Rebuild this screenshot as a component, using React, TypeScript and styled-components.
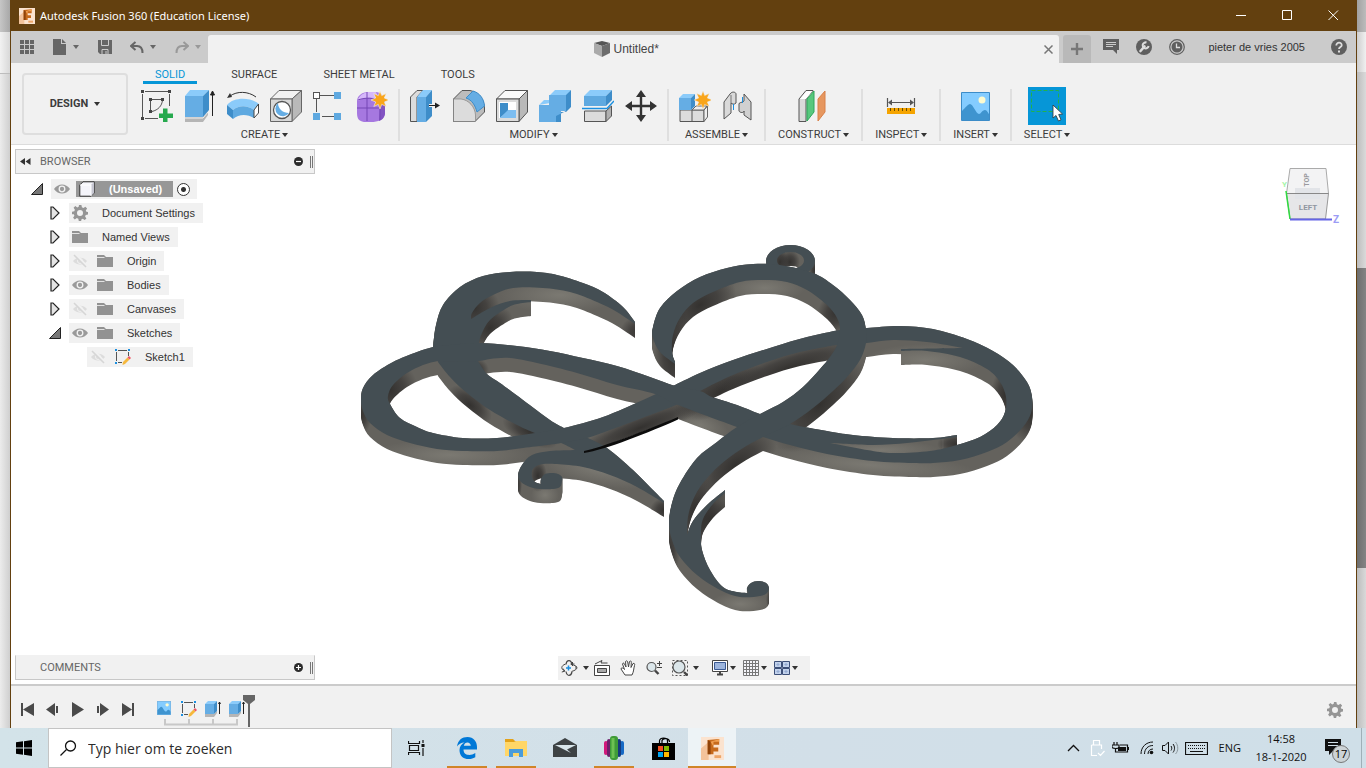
import React from 'react';
import styled, { createGlobalStyle } from 'styled-components';

const INK = '#3c3c3c';
const CHROME = '#f1f1f1';
const BROWN = '#63400f';

const Global = createGlobalStyle`
  * { box-sizing: border-box; }
  body { margin: 0; font-family: "Liberation Sans", Arial, sans-serif; font-size: 11px; color: ${INK}; }
  button { font: inherit; color: inherit; background: none; border: 0; padding: 0; }
  ul { list-style: none; margin: 0; padding: 0; }
  svg { display: block; flex: none; }
`;

/* ---------- page frame ---------- */

const Page = styled.div`
  display: flex;
  flex-direction: column;
  min-height: 100vh;
`;
const Desktop = styled.div`
  flex: 1;
  display: flex;
`;
const BehindLeft = styled.div`
  width: 10px;
  display: flex;
  flex-direction: column;
  background: linear-gradient(to right, #ececec, #cfcfcf);
  &::before {
    content: '';
    height: 32px;
    background: linear-gradient(to right, #c6c6c6, #a8a8a8);
  }
  &::after {
    content: '';
    height: 41px;
    border-bottom: 1px solid #bdbdbd;
    background: linear-gradient(to right, #f2f2f2, #d8d8d8);
  }
`;
const BehindRight = styled.div`
  width: 9px;
  display: flex;
  flex-direction: column;
  background: linear-gradient(to right, #bdbdbd, #d9d9d9);
`;
const BehindBlock = styled.div<{ $h: number; $from: string; $to: string }>`
  height: ${p => p.$h}px;
  background: linear-gradient(to right, ${p => p.$from}, ${p => p.$to});
`;
const AppWindow = styled.main`
  flex: 1;
  min-width: 0;
  display: flex;
  flex-direction: column;
  border: solid ${BROWN};
  border-width: 0 1px;
`;

/* ---------- title bar ---------- */

const TitleBar = styled.header`
  height: 31px;
  display: flex;
  align-items: center;
  gap: 5px;
  padding-left: 8px;
  background: ${BROWN};
  color: #fff;
  font: 11px/16px "Noto Sans", "Open Sans", sans-serif;
`;
const TitleText = styled.span`
  flex: 1;
`;
const CaptionButton = styled.button`
  width: 46px;
  height: 31px;
  display: flex;
  align-items: center;
  justify-content: center;
  margin-right: -5px;
  &:last-child { margin-right: 0; }
`;

/* ---------- document tab bar ---------- */

const TabBar = styled.div`
  height: 32px;
  display: flex;
  align-items: flex-end;
  background: #cbcbcb;
  color: #666;
`;
const QuickAccess = styled.div`
  width: 197px;
  height: 32px;
  display: flex;
  align-items: center;
  padding: 0 7px 0 9px;
  justify-content: space-between;
`;
const QuickItem = styled.button<{ $faded?: boolean }>`
  display: flex;
  align-items: center;
  gap: 6px;
  color: ${p => (p.$faded ? '#999' : '#666')};
`;
const DocTab = styled.div`
  flex: 1;
  height: 28px;
  display: flex;
  align-items: center;
  padding: 0 6px;
  background: ${CHROME};
  border-radius: 3px 3px 0 0;
`;
const DocTitle = styled.div`
  flex: 1;
  display: flex;
  align-items: center;
  justify-content: center;
  gap: 4px;
  padding-right: 6px;
  font: 12px/16px "Liberation Sans", Arial, sans-serif;
  color: #444;
`;
const NewTab = styled.button`
  width: 28px;
  height: 28px;
  margin-left: 4px;
  display: flex;
  align-items: center;
  justify-content: center;
  background: #b9b9b9;
  border-radius: 3px 3px 0 0;
`;
const AccountTools = styled.div`
  height: 32px;
  display: flex;
  align-items: center;
  gap: 17px;
  padding: 0 9px 0 12px;
`;
const UserName = styled.button`
  margin: 0 9px 0 6px;
  color: #333;
`;

/* ---------- ribbon ---------- */

const Ribbon = styled.section`
  height: 82px;
  display: flex;
  background: ${CHROME};
  border-bottom: 1px solid #dcdcdc;
  font: 11px/12px Roboto, "Liberation Sans", sans-serif;
  color: ${INK};
`;
const Workspace = styled.button`
  width: 106px;
  height: 62px;
  margin: 10px 3px 0 11px;
  display: flex;
  align-items: center;
  justify-content: center;
  gap: 6px;
  border: 2px solid #dedede;
  border-radius: 4px;
  font-weight: 700;
`;
const RibbonBody = styled.div`
  display: flex;
  flex-direction: column;
`;
const RibbonTabs = styled.nav`
  display: flex;
  gap: 22px;
  height: 23px;
  padding: 5px 0 0 12px;
`;
const RibbonTab = styled.button<{ $active?: boolean }>`
  height: 16px;
  padding: 1px 12px;
  border-bottom: 3px solid ${p => (p.$active ? '#0696d7' : 'transparent')};
  color: ${p => (p.$active ? '#0696d7' : INK)};
  line-height: 12px;
`;
const Groups = styled.div`
  display: flex;
  align-items: flex-start;
  padding-top: 3px;
`;
const Group = styled.div<{ $pad?: number; $last?: boolean }>`
  height: 52px;
  display: flex;
  flex-direction: column;
  align-items: center;
  justify-content: space-between;
  padding: 0 ${p => p.$pad ?? 10}px;
  border-right: 2px solid ${p => (p.$last ? 'transparent' : '#dfdfdf')};
`;
const Icons = styled.div`
  display: flex;
  gap: 11px;
`;
const ToolButton = styled.button<{ $on?: boolean }>`
  width: ${p => (p.$on ? 38 : 32)}px;
  height: ${p => (p.$on ? 38 : 32)}px;
  margin: ${p => (p.$on ? '-2px 0 0' : '1px 0 0')};
  display: flex;
  align-items: center;
  justify-content: center;
  background: ${p => (p.$on ? '#0696d7' : 'none')};
`;
const GroupLabel = styled.button`
  display: flex;
  align-items: center;
  gap: 2px;
  line-height: 12px;
`;
const Caret = styled.span<{ $soft?: boolean }>`
  border: 3px solid transparent;
  border-top: 4px solid ${p => (p.$soft ? 'currentColor' : '#333')};
  border-bottom: 0;
`;

/* ---------- canvas ---------- */

const Canvas = styled.section`
  position: relative;
  flex: 1;
  min-height: 539px;
  display: flex;
  flex-direction: column;
  justify-content: space-between;
  padding: 4px;
  background: #fff;
`;
const ModelLayer = styled.svg`
  position: absolute;
  inset: 0;
  width: 100%;
  height: 100%;
`;
const TopRow = styled.div`
  position: relative;
  display: flex;
  justify-content: space-between;
  align-items: flex-start;
`;
const BottomRow = styled.div`
  position: relative;
  display: grid;
  grid-template-columns: 1fr auto 1fr;
  align-items: end;
`;
const CubeBox = styled.div`
  margin: 11px 10px 0 0;
`;
const Side = styled.aside`
  width: 300px;
`;
const PanelBar = styled.div<{ $closed?: boolean }>`
  width: 300px;
  height: 25px;
  display: flex;
  align-items: center;
  padding: 0 1px 0 4px;
  background: ${CHROME};
  border: 1px solid #c8c8c8;
  border-top-color: ${p => (p.$closed ? CHROME : '#c8c8c8')};
  color: #666;
  font: 11px/14px Roboto, "Liberation Sans", sans-serif;
`;
const PanelTitle = styled.span`
  flex: 1;
  margin-left: 9px;
`;
const Spacer = styled.span`
  width: 11px;
`;
const Grip = styled.span`
  width: 3px;
  height: 12px;
  margin-left: 7px;
  border: solid #777;
  border-width: 0 1px;
`;
const Tree = styled.ul`
  padding-top: 5px;
  display: flex;
  flex-direction: column;
  gap: 4px;
`;
const Row = styled.li<{ $depth: number }>`
  height: 20px;
  display: flex;
  align-items: center;
  padding-left: ${p => 16 + p.$depth * 18}px;
`;
const Toggle = styled.button`
  width: 12px;
  height: 14px;
  margin-right: 8px;
`;
const Chip = styled.div`
  height: 20px;
  display: flex;
  align-items: center;
  gap: 9px;
  padding: 0 8px 0 3px;
  background: ${CHROME};
`;
const Label = styled.span`
  margin-left: 5px;
  color: #333;
`;
const RootChip = styled(Chip)`
  gap: 6px;
  padding-right: 7px;
`;
const RootName = styled.span`
  height: 16px;
  display: flex;
  align-items: center;
  gap: 14px;
  padding: 0 11px 0 3px;
  background: #979797;
  color: #fff;
  font-weight: 700;
`;
const RootRadio = styled.input`
  appearance: none;
  width: 13px;
  height: 13px;
  margin: 0 0 0 -2px;
  border: 1px solid #333;
  border-radius: 50%;
  background: radial-gradient(circle, #333 0 2px, #fff 3px);
`;
const NavBar = styled.div`
  height: 24px;
  display: flex;
  align-items: center;
  gap: 10px;
  padding: 0 12px 0 3px;
  background: ${CHROME};
`;
const NavButton = styled.button<{ $menu?: boolean }>`
  display: flex;
  align-items: center;
  gap: 5px;
  margin-right: ${p => (p.$menu ? -5 : 0)}px;
`;
const NavDisplay = styled.div`
  display: flex;
  gap: 7px;
  margin-left: 8px;
`;
const TightButton = styled(NavButton)`
  gap: 2px;
`;

/* ---------- timeline ---------- */

const Timeline = styled.footer`
  height: 44px;
  display: flex;
  align-items: flex-start;
  padding: 8px 13px 0 10px;
  background: ${CHROME};
  border-top: 2px solid #cbcbcb;
`;
const Playback = styled.div`
  display: flex;
  gap: 11px;
  padding-top: 8px;
`;
const Features = styled.div`
  flex: 1;
  display: flex;
  align-items: flex-start;
  margin-left: 22px;
`;
const FeatureButton = styled.button`
  width: 24px;
  height: 31px;
  padding-top: 7px;
`;
const Marker = styled.div`
  margin: 1px 0 0 -10px;
`;
const SettingsButton = styled.button`
  padding-top: 8px;
`;

/* ---------- taskbar ---------- */

const Taskbar = styled.footer`
  height: 40px;
  display: flex;
  background: linear-gradient(to right, #d3e3e9, #d2dfe8 60%, #cfdfe8);
  font: 12px/18px "Open Sans", "Noto Sans", sans-serif;
  color: #111;
`;
const TaskButton = styled.button<{ $running?: boolean; $active?: boolean }>`
  width: 48px;
  height: 40px;
  display: flex;
  align-items: center;
  justify-content: center;
  position: relative;
  background: ${p => (p.$active ? '#edf3f6' : 'none')};
  &::after {
    content: '';
    display: ${p => (p.$running ? 'block' : 'none')};
    position: absolute;
    left: ${p => (p.$active ? 0 : 4)}px;
    right: ${p => (p.$active ? 0 : 4)}px;
    bottom: 0;
    height: 2px;
    background: #d08528;
  }
`;
const SearchBox = styled.label`
  width: 344px;
  display: flex;
  align-items: center;
  gap: 11px;
  padding: 0 11px;
  background: #fff;
  border: 1px solid #c4c4c4;
`;
const SearchInput = styled.input`
  flex: 1;
  min-width: 0;
  padding: 1px 0 0;
  border: 0;
  outline: 0;
  font: 14px/20px "Open Sans", "Noto Sans", sans-serif;
  &::placeholder { color: #2b2b2b; opacity: 1; }
`;
const TaskApps = styled.div`
  flex: 1;
  display: flex;
  gap: 1px;
`;
const TaskViewSlot = styled.div`
  margin-right: 2px;
`;
const Tray = styled.div`
  display: flex;
  align-items: center;
  gap: 6px;
`;
const Clock = styled.time`
  width: 68px;
  text-align: center;
  font: 11px/18px "Open Sans", "Noto Sans", sans-serif;
`;
const Lang = styled.button`
  margin-left: 5px;
  font: 11px/18px "Open Sans", "Noto Sans", sans-serif;
`;
const Notice = styled.button`
  width: 28px;
  margin: 6px 2px 0 4px;
`;
const PeekEdge = styled.span`
  width: 5px;
  height: 40px;
  border-left: 1px solid #9fb0b8;
`;

/* ---------- icons ---------- */

type PicProps = { w?: number; h?: number; children: React.ReactNode };
const Pic = ({ w = 32, h = 32, children }: PicProps) => (
  <svg width={w} height={h} viewBox={`0 0 ${w} ${h}`} fill="none" aria-hidden="true">{children}</svg>
);

const FusionLogo = ({ size }: { size: number }) => (
  <svg width={size} height={size} viewBox="0 0 24 24" aria-hidden="true">
    <rect width="24" height="24" fill="#fbe3cf" />
    <path d="M0 12L8 5V24H0z" fill="#f3c39b" />
    <path d="M7 3L19 2V8H13V11H18V15H13V18H7z" fill="#c66a1c" />
    <path d="M7 3L10 5V18H7z" fill="#8f4309" />
    <path d="M10 5L19 2V5H13V10z" fill="#f0a052" />
    <path d="M14 19h7v3h-7z" fill="#eda568" />
  </svg>
);

const star = 'M24 1L25.700 5.600L30.200 3.500L28.300 8L33 10L28.300 12L30.200 16.500L25.700 14.400L24 19L22.300 14.400L17.800 16.500L19.700 12L15 10L19.700 8L17.800 3.500L22.300 5.600Z';

const SketchIcon = () => (
  <Pic>
    <path d="M4 1.500H27M1.500 4V27M28.500 4V16M4 28.500H17M10 9.500H21M9.500 10V20M21.500 10C21 16 17 20 11 21.500" stroke="#555" strokeWidth="1" />
    <path d="M0 0h3v3H0zM27 0h3v3h-3zM0 27h3v3H0zM8 8h3v3H8zM20 8h3v3h-3zM8 20h3v3H8z" fill="#444" />
    <path d="M22 18.500h4.500v5H32v4.500h-5.500V33H22v-5h-4v-4.500h4z" fill="#26a94e" />
  </Pic>
);
const ExtrudeIcon = () => (
  <Pic>
    <path d="M1 27H19L24 21V25L19 32H1z" fill="#b5b5b5" />
    <path d="M1 28H19L24 22" stroke="#f1f1f1" />
    <path d="M1 6L6 0H25L19 6z" fill="#8bcbfa" />
    <path d="M1 6H19V27H1z" fill="#65ade4" />
    <path d="M19 6L25 0V20L19 27z" fill="#3e8dc9" />
    <path d="M28.500 26V3M26.500 5L28.500 1L30.500 5z" stroke="#222" fill="#222" />
  </Pic>
);
const RevolveIcon = () => (
  <Pic>
    <path d="M0 15C7 7 23 7 32 14L27 20C20 15 12 15 6 20z" fill="#8bcbfa" />
    <path d="M0 15L6 20V29L0 24z" fill="#3e8dc9" />
    <path d="M6 20C12 15 20 15 27 20V28C20 24 12 24 6 29z" fill="#5fa9e0" />
    <path d="M27 20L31.500 14V23L27 28z" fill="#fff" stroke="#444" />
    <path d="M3 6C10 1 21 1 29 7" stroke="#333" />
    <path d="M0 8L3 3L5 7z" fill="#333" />
  </Pic>
);
const HoleIcon = () => (
  <Pic>
    <path d="M.5 9L9 .5H31.500L22 9z" fill="#f2f2f2" stroke="#666" />
    <path d="M22 9L31.500 .5V22L22 31.500z" fill="#b9b9b9" stroke="#666" />
    <path d="M.5 9H22V31.500H.5z" fill="#d8d8d8" stroke="#666" />
    <circle cx="12" cy="20" r="8.500" fill="#fff" stroke="#555" strokeWidth="1.300" />
    <path d="M8 13A7.500 7.500 0 1 0 19 23C13 23 8 19 8 13z" fill="#65ade4" />
  </Pic>
);
const PatternIcon = () => (
  <Pic>
    <path d="M7 5.500H21M3.500 9V22M9 26.500H21" stroke="#555" />
    <rect x=".5" y="2.500" width="6" height="6" fill="#fff" stroke="#555" />
    <path d="M21 2h7v7h-7zM0 23h7v7H0zM21 23h7v7h-7z" fill="#5fa9e0" />
  </Pic>
);
const FormIcon = () => (
  <Pic>
    <path d="M1 11C1 6 6 2 12 2H20C27 3 29 9 29 16V24C28 30 22 32 15 32H8C2 31 1 28 1 22z" fill="#a678e0" />
    <path d="M24 14L29 12V24C28 28 26 30 23 31z" fill="#8253c2" />
    <path d="M2 9C5 4 9 2 14 2H20L23 9C15 7 8 7 2 11z" fill="#d6b8fa" />
    <path d="M1 18H24M11 2V31M2 10C10 7 18 8 24 11V30" stroke="#7446b5" />
    <path d={star} fill="#f9a51a" stroke="#f1f1f1" strokeWidth=".6" />
  </Pic>
);
const PressPullIcon = () => (
  <Pic>
    <path d="M.5 7L7 .5H13L7 7V31.500H.5z" fill="#dcdcdc" stroke="#555" />
    <path d="M7 7L13 0H22L16 7z" fill="#8bcbfa" />
    <path d="M7 7H16V32H7z" fill="#65ade4" />
    <path d="M16 7L22 0V26L16 32z" fill="#3e8dc9" />
    <path d="M19 15.500H27" stroke="#f1f1f1" strokeWidth="3" />
    <path d="M19 15.500H27" stroke="#222" />
    <path d="M25 12.500L30 15.500L25 18.500z" fill="#222" />
  </Pic>
);
const FilletIcon = () => (
  <Pic>
    <path d="M.5 9L9 .5H17C25 2 31 9 31.500 18V22L22 31.500H.5z" fill="#bcbcbc" stroke="#555" />
    <path d="M.5 9H8C16 10 22 17 22.500 25V31.500H.5z" fill="#dcdcdc" stroke="#777" strokeWidth=".6" />
    <path d="M13 8L20 1C27 3 31 9 31.500 16L24 22C22 15 19 10 13 8z" fill="#65ade4" stroke="#3e8dc9" />
  </Pic>
);
const ShellIcon = () => (
  <Pic>
    <path d="M.5 9L9 .5H31.500L23 9z" fill="#fafafa" stroke="#555" />
    <path d="M23 9L31.500 .5V22L23 31.500z" fill="#b9b9b9" stroke="#555" />
    <path d="M.5 9H23V31.500H.5z" fill="#dcdcdc" stroke="#555" />
    <path d="M3 12H20V28H3z" fill="#fff" />
    <path d="M4 13h8v8l-8 7z" fill="#3e8dc9" />
    <path d="M12 20h8v8H4z" fill="#7cbdf0" />
  </Pic>
);
const CombineIcon = () => (
  <Pic>
    <path d="M0 15L5 10H10V6L16 0H32L28 5V10z" fill="#8bcbfa" />
    <path d="M10 5H27V21H22V32H0V15H10z" fill="#65ade4" />
    <path d="M27 5L32 0V17L27 22H22V32L17 32V26L27 21z" fill="#3e8dc9" />
  </Pic>
);
const SplitIcon = () => (
  <Pic>
    <path d="M2 6L8 0H30L24 6z" fill="#8bcbfa" />
    <path d="M2 6H24V16H2z" fill="#5fa9e0" />
    <path d="M24 6L30 0V10L24 16z" fill="#3e8dc9" />
    <path d="M2.500 21H24V31.500H2.500z" fill="#dcdcdc" stroke="#555" />
    <path d="M24 21L29.500 16V26L24 31.500z" fill="#b0b0b0" stroke="#555" />
    <path d="M0 18.500H25L32 11" stroke="#1b8fe0" strokeWidth="1.500" />
  </Pic>
);
const MoveIcon = () => (
  <Pic>
    <path d="M16 4V28M4 16H28" stroke="#333" strokeWidth="2.400" />
    <path d="M16 0L21 7H11zM16 32L21 25H11zM0 16L7 11V21zM32 16L25 11V21z" fill="#333" />
  </Pic>
);
const ComponentIcon = () => (
  <Pic>
    <path d="M1 20H25V31.500H1zM13 20V31" fill="#dcdcdc" stroke="#555" />
    <path d="M25 20L28.500 16V27L25 31.500zM13 20L17 16H28L25 20z" fill="#efefef" stroke="#666" />
    <path d="M0 8L4 4H16L12 8z" fill="#8bcbfa" />
    <path d="M0 8H12V20H0z" fill="#65ade4" />
    <path d="M12 8L16 4V16L12 20z" fill="#3e8dc9" />
    <path d={star} fill="#f9a51a" stroke="#f1f1f1" strokeWidth=".4" />
  </Pic>
);
const JointIcon = () => (
  <Pic>
    <path d="M2 12L8 4C10 1 14 2 14 4V13C12 15 10 14 9 13V23L2 29z" fill="#d9d9d9" stroke="#555" />
    <path d="M29 12L22 4V11C20 13 17 12 17 14V21C18 23 22 23 22 21V25L29 30z" fill="#d0d0d0" stroke="#555" />
    <path d="M9 5V13" stroke="#777" />
    <path d="M11.500 14V20M20.500 7V13" stroke="#1b8fe0" />
  </Pic>
);
const PlaneIcon = () => (
  <Pic>
    <path d="M1 9L8 .5H15L8 9V31.500H1z" fill="#dadada" stroke="#555" />
    <path d="M2 9L8.500 1H14.500L8 9z" fill="#fff" />
    <path d="M9 9L16 1V22L9 31z" fill="#57c77d" stroke="#2ea65a" />
    <path d="M20 9L27 1V22L20 31z" fill="#e6975f" stroke="#d98048" />
  </Pic>
);
const MeasureIcon = () => (
  <Pic>
    <path d="M2.500 8V17M29.500 8V17M4 12.500H28" stroke="#555" strokeWidth="1.200" />
    <path d="M3 12.500L7 9.500V15.500zM29 12.500L25 9.500V15.500z" fill="#555" />
    <path d="M2 18h28v6H2z" fill="#f5a400" />
    <path d="M5.500 18v3M9.500 18v3M13.500 18v3M17.500 18v3M21.500 18v3M25.500 18v3" stroke="#6b4d00" />
  </Pic>
);
const PictureArt = () => (
  <>
    <path d="M.5 .5h28v28H.5z" fill="#84ccff" stroke="#3c8cc8" />
    <circle cx="21" cy="8" r="3.500" fill="#fdfbd0" />
    <path d="M1 19C4 16 7 12 9 12C12 12 15 22 18 22C20 22 21 18 24 18C26 18 27 21 28 22V28H1z" fill="#3f94cf" />
  </>
);
const InsertIcon = () => <Pic w={29} h={29}><PictureArt /></Pic>;
const SelectIcon = () => (
  <Pic w={38} h={38}>
    <path d="M3.500 3.500H30.500V24.500H3.500z" stroke="#22b14c" strokeDasharray="4 2" />
    <path d="M25 18V31L28 28.500L30.500 34L33 32.800L30.700 27.500L34.500 27z" fill="#fff" stroke="#333" strokeWidth=".8" />
  </Pic>
);

const gearPath = 'M7 0h2.400l.5 2.300 1.500.7 2-1.300 1.700 1.700-1.300 2 .6 1.400L16 7v2.400l-2.300.5-.6 1.500 1.300 2-1.700 1.700-2-1.300-1.400.6L9.200 16H6.800l-.5-2.300-1.500-.6-2 1.300-1.700-1.700 1.300-2-.6-1.400L0 9.200V6.800l2.300-.5.6-1.500-1.300-2 1.700-1.700 2 1.300 1.400-.6zM8 5a3 3 0 1 0 0 6a3 3 0 0 0 0-6z';
const Gear = () => <Pic w={16} h={16}><path d={gearPath} fill="#959595" fillRule="evenodd" /></Pic>;
const Eye = () => (
  <Pic w={16} h={16}>
    <path d="M0 8C4 2 12 2 16 8C12 14 4 14 0 8z" fill="#9a9a9a" />
    <circle cx="8" cy="8" r="2.800" stroke="#f1f1f1" strokeWidth="1.300" />
  </Pic>
);
const EyeOff = () => (
  <Pic w={16} h={16}>
    <path d="M1 8C4 3.500 12 3.500 15 8C12 12.500 4 12.500 1 8z" fill="#dcdcdc" />
    <circle cx="8" cy="8" r="2.500" stroke="#f1f1f1" />
    <path d="M3 1L15 14" stroke="#f1f1f1" strokeWidth="3" />
    <path d="M2 2L14 14" stroke="#d6d6d6" strokeWidth="1.600" />
  </Pic>
);
const Folder = () => (
  <Pic w={16} h={16}>
    <path d="M0 2H7L9 4H16V14H0z" fill="#929292" />
    <path d="M0 4.500H7.500" stroke="#e2e2e2" />
  </Pic>
);
const CubeIcon = () => (
  <Pic w={16} h={16}>
    <path d="M.8 4L4 .8H15.200V12L12 15.200H.8z" fill="#f4f4fa" stroke="#333" />
    <path d="M12 4L15 1V12L12 15z" fill="#c5c5d0" />
    <path d="M1 4H12V15" stroke="#fff" />
  </Pic>
);
const SmallSketch = () => (
  <Pic w={16} h={16}>
    <path d="M1.500 3V12M3 1.500H12M13.500 3V7M3 13.500H7" stroke="#555" />
    <path d="M0 0h2v2H0zM13 0h2v2h-2zM0 13h2v2H0z" fill="#1b8fe0" />
    <path d="M8 13L12.500 8.500L14.500 10.500L10 15L7.500 16z" fill="#f6b83c" />
    <path d="M12.500 8.500L14 7L16 9L14.500 10.500z" fill="#ee5464" />
  </Pic>
);
const SmallExtrude = () => (
  <Pic w={16} h={16}>
    <path d="M0 13H9L12 10V12L9 16H0z" fill="#b5b5b5" />
    <path d="M0 3L3 0H12L9 3z" fill="#8bcbfa" />
    <path d="M0 3H9V13H0z" fill="#65ade4" />
    <path d="M9 3L12 0V10L9 13z" fill="#3e8dc9" />
    <path d="M14.500 13V1M13.500 3L14.500 1L15.500 3" stroke="#222" />
  </Pic>
);
const SmallPicture = () => <svg width="14" height="14" viewBox="0 0 29 29" aria-hidden="true"><PictureArt /></svg>;
const Closed = () => <Pic w={12} h={14}><path d="M2 1V13L4 13L10 7L4 1z" fill="#e4e4e4" stroke="#222" strokeWidth="1.200" /></Pic>;
const Opened = () => <Pic w={12} h={14}><path d="M11.500 1.500V12.500H.5z" fill="#777" stroke="#222" /></Pic>;
const RoundSign = ({ plus }: { plus?: boolean }) => (
  <Pic w={9} h={9}>
    <circle cx="4.500" cy="4.500" r="4.500" fill="#2c2c2c" />
    <path d={plus ? 'M2 4.500H7M4.500 2V7' : 'M2 4.500H7'} stroke="#fff" strokeWidth="1.200" />
  </Pic>
);

/* ---------- model ---------- */

type Pt = [number, number];

/* Joins smooth runs of points into one closed outline; runs meet at corners. */
const outline = (runs: Pt[][]): string => {
  let d = `M${runs[0][0].join(' ')}`;
  runs.forEach((run, n) => {
    if (n > 0) d += `L${run[0].join(' ')}`;
    for (let i = 0; i < run.length - 1; i++) {
      const p0 = run[Math.max(i - 1, 0)];
      const p1 = run[i];
      const p2 = run[i + 1];
      const p3 = run[Math.min(i + 2, run.length - 1)];
      const a = [p1[0] + (p2[0] - p0[0]) / 6, p1[1] + (p2[1] - p0[1]) / 6].map(v => v.toFixed(1));
      const b = [p2[0] - (p3[0] - p1[0]) / 6, p2[1] - (p3[1] - p1[1]) / 6].map(v => v.toFixed(1));
      d += `C${a.join(' ')} ${b.join(' ')} ${p2.join(' ')}`;
    }
  });
  return d + 'Z';
};

const heartLeft = outline([
  [[635, 322], [623, 307], [603, 292], [583, 283], [557, 275], [537, 272], [510, 272], [483, 276], [460, 287], [443, 305], [436, 325], [433, 347]],
  [[438, 362], [450, 377], [467, 393], [490, 410], [517, 425], [535, 433], [561, 443], [575, 450]],
  [[575, 450], [550, 451], [532, 455], [522, 465], [518, 475], [521, 482], [530, 487], [540, 489], [553, 489], [560, 487], [562, 481], [562, 477], [558, 474], [552, 473], [545, 474], [541, 479], [541, 484]],
  [[541, 484], [535, 482], [532, 477], [532, 471], [535, 467], [543, 464], [557, 464], [583, 467], [610, 475], [637, 487], [664, 503]],
  [[664, 501], [650, 487], [633, 470], [607, 448], [588, 438]],
  [[564, 428], [550, 420], [523, 400], [500, 383], [487, 374], [478, 361]],
  [[479, 342], [482, 333], [490, 320], [507, 308], [517, 304], [531, 302]],
  [[531, 300], [510, 301], [490, 308], [471, 319]],
  [[471, 319], [472, 313], [480, 303], [493, 295], [513, 288], [543, 288], [570, 292], [597, 302], [617, 312], [635, 324]],
]);

const loopLeft = outline([
  [[445, 345], [433, 347], [417, 352], [393, 362], [373, 375], [363, 388], [361, 400], [363, 411], [370, 423], [387, 435], [410, 443], [437, 449], [463, 451], [497, 451], [523, 448], [547, 445], [561, 443], [587, 438], [610, 430], [637, 420], [678, 404], [700, 391], [733, 375], [767, 362], [800, 352], [837, 345], [860, 343]],
  [[860, 328], [840, 330], [807, 337], [773, 347], [733, 360], [700, 373], [675, 385], [643, 400], [603, 417], [564, 428], [535, 433], [497, 438], [463, 438], [433, 433], [417, 427], [400, 418], [390, 404], [388, 396], [393, 385], [407, 373], [423, 365], [438, 361], [450, 360]],
]);

const loopRight = outline([
  [[440, 346], [479, 343], [517, 346], [550, 351], [583, 358], [617, 366], [650, 377], [675, 386], [700, 391], [712, 397], [737, 405], [760, 414], [790, 424], [827, 431], [853, 435], [893, 438], [933, 438], [957, 435]],
  [[957, 437], [933, 440], [907, 443], [873, 445], [830, 443]],
  [[830, 443], [867, 450], [893, 453], [930, 451], [957, 445], [980, 437], [997, 425], [1005, 412], [1006, 397], [1000, 382], [987, 369], [960, 357], [927, 351], [901, 351]],
  [[901, 349], [963, 348]],
  [[963, 348], [927, 342], [893, 340], [867, 343], [850, 345]],
  [[850, 329], [867, 328], [900, 326], [933, 329], [967, 339], [993, 351], [1013, 365], [1027, 382], [1032, 397], [1031, 413], [1023, 427], [1007, 442], [987, 452], [960, 460], [933, 463], [913, 463], [873, 461], [827, 454], [790, 445], [763, 437], [737, 427], [678, 405], [655, 394], [617, 385], [577, 373], [537, 363], [510, 358], [490, 359], [478, 361], [440, 362]],
]);

const heartRight = outline([
  [[675, 364], [660, 352], [653, 338], [653, 327], [660, 308], [677, 291], [700, 277], [727, 268], [753, 264], [780, 265], [813, 273], [833, 285], [850, 300], [862, 315], [866, 330], [866, 343], [860, 360], [847, 377], [833, 391], [813, 408], [790, 424], [763, 437], [740, 450], [720, 465], [703, 483], [693, 500], [688, 517], [687, 535]],
  [[687, 535], [693, 521], [707, 505], [725, 490]],
  [[725, 493], [713, 504], [703, 519], [701, 533], [702, 550], [710, 570], [723, 587], [737, 592], [748, 593]],
  [[748, 593], [747, 588], [751, 583], [758, 581], [766, 583], [769, 588], [767, 593], [760, 596], [740, 597], [720, 590], [697, 575], [680, 557], [672, 540], [669, 523], [672, 503], [680, 483], [697, 458], [717, 442], [737, 427], [760, 414], [783, 402], [803, 387], [820, 369], [830, 357], [837, 345], [840, 330], [837, 318], [827, 305], [807, 290], [787, 282], [763, 280], [740, 282], [713, 292], [693, 303], [680, 318], [673, 335], [672, 352], [675, 362]],
]);

const ring = 'M766 261a24.500 16 0 1 0 49 0a24.500 16 0 1 0 -49 0zM777 260.500a13.500 8.500 0 1 1 27 0a13.500 8.500 0 1 1 -27 0z';

const faces = [ring, heartLeft, loopLeft, loopRight, heartRight];
const depth = Array.from({ length: 15 }, (_, i) => i);

/* Shade spots on the side walls: cx, cy, rx, ry, tilt */
const darkSpots: number[][] = [
  [390, 390, 28, 30, 0], [474, 308, 26, 24, 0], [490, 328, 26, 18, -40],
  [530, 432, 30, 12, 25], [470, 405, 26, 14, 40], [538, 476, 9, 16, 0],
  [672, 350, 18, 60, 0], [700, 305, 40, 26, -35], [836, 312, 18, 24, 30],
  [720, 392, 50, 22, -25], [790, 368, 80, 18, -18], [820, 405, 60, 30, -45],
  [735, 465, 50, 26, -40], [695, 510, 22, 40, 0], [712, 520, 26, 30, 0],
  [1005, 395, 14, 26, 0], [1034, 415, 26, 30, 0], [360, 415, 12, 20, 0],
  [640, 428, 70, 14, -22], [790, 262, 10, 12, 0], [780, 262, 8, 14, 0], [640, 332, 20, 16, 0],
  [668, 550, 12, 30, 0], [772, 600, 6, 14, 0], [517, 485, 5, 16, 0], [815, 270, 6, 10, 0],
  [664, 510, 14, 12, 0], [957, 444, 20, 10, 0], [475, 370, 14, 12, 0],
];
const lightSpots: number[][] = [
  [450, 455, 80, 16, 0], [560, 295, 60, 18, 0], [545, 495, 14, 12, 0], [600, 470, 60, 16, 10],
  [765, 288, 40, 14, 0], [925, 360, 60, 16, 0], [870, 465, 110, 16, 5], [740, 604, 30, 12, 0],
  [700, 425, 30, 14, 20], [880, 450, 60, 10, 0],
];

const Model = () => (
  <ModelLayer viewBox="11 145 1345 539" preserveAspectRatio="xMidYMid meet" role="img" aria-label="Infinity heart pendant">
    <defs>
      <clipPath id="walls">
        {faces.map((d, f) => depth.map(i => (
          <path key={`${f}-${i}`} d={d} clipRule={f === 0 ? 'evenodd' : 'nonzero'} transform={`translate(0 ${i})`} />
        )))}
      </clipPath>
      <radialGradient id="dark">
        <stop offset="0" stopColor="#2e2c2a" stopOpacity=".9" />
        <stop offset=".5" stopColor="#333130" stopOpacity=".65" />
        <stop offset="1" stopColor="#333130" stopOpacity="0" />
      </radialGradient>
      <radialGradient id="light">
        <stop offset="0" stopColor="#7b7972" />
        <stop offset="1" stopColor="#7b7972" stopOpacity="0" />
      </radialGradient>
    </defs>
    <g clipPath="url(#walls)">
      <rect x="350" y="230" width="700" height="400" fill="#64625d" />
      {lightSpots.map(([x, y, rx, ry, t], i) => (
        <ellipse key={i} cx={x} cy={y} rx={rx} ry={ry} transform={`rotate(${t} ${x} ${y})`} fill="url(#light)" />
      ))}
      {darkSpots.map(([x, y, rx, ry, t], i) => (
        <ellipse key={i} cx={x} cy={y} rx={rx} ry={ry} transform={`rotate(${t} ${x} ${y})`} fill="url(#dark)" />
      ))}
    </g>
    {faces.map((d, f) => <path key={f} d={d} fill="#444e53" fillRule={f === 0 ? 'evenodd' : 'nonzero'} />)}
    <path d="M584 451C600 448 645 431 678 417V419.500C650 432 605 450 584 453z" fill="#0c0c0c" />
  </ModelLayer>
);

const ViewCube = () => (
  <svg width="62" height="70" viewBox="1280 160 62 70" role="img" aria-label="View cube">
    <path d="M1290 168.500H1326L1328.500 193.500H1286.500z" fill="#f3f3f4" stroke="#aaa" />
    <path d="M1286.500 193.500H1328.500L1325.500 219H1290z" fill="#e6e6e8" stroke="#999" />
    <path d="M1295 188h25v11h-25z" fill="#e2e4e8" />
    <path d="M1286.500 193.500H1328.500" stroke="#888" />
    <path d="M1286 191L1290 219" stroke="#2fdc3f" strokeWidth="1.500" />
    <path d="M1290 219.500H1332" stroke="#6565e6" strokeWidth="1.800" />
    <g fontFamily="Roboto, sans-serif" fontWeight="700">
      <text x="1308" y="210" fontSize="8" textAnchor="middle" fill="#9196a0">LEFT</text>
      <text x="1307" y="180" fontSize="7" textAnchor="middle" dominantBaseline="central" fill="#9a9a9e" transform="rotate(-90 1307 180)">TOP</text>
      <text x="1282" y="187" fontSize="8" fill="#a4f5a9">Y</text>
      <text x="1333" y="223" fontSize="10" fill="#9c9cf5">Z</text>
    </g>
  </svg>
);

/* ---------- content data ---------- */

const groups: { name: string; pad?: number; on?: boolean; icons: [string, React.ReactNode][] }[] = [
  { name: 'CREATE', icons: [['Create sketch', <SketchIcon />], ['Extrude', <ExtrudeIcon />], ['Revolve', <RevolveIcon />], ['Hole', <HoleIcon />], ['Pattern', <PatternIcon />], ['Create form', <FormIcon />]] },
  { name: 'MODIFY', icons: [['Press pull', <PressPullIcon />], ['Fillet', <FilletIcon />], ['Shell', <ShellIcon />], ['Combine', <CombineIcon />], ['Split body', <SplitIcon />], ['Move', <MoveIcon />]] },
  { name: 'ASSEMBLE', icons: [['New component', <ComponentIcon />], ['Joint', <JointIcon />]] },
  { name: 'CONSTRUCT', pad: 12, icons: [['Offset plane', <PlaneIcon />]] },
  { name: 'INSPECT', pad: 12, icons: [['Measure', <MeasureIcon />]] },
  { name: 'INSERT', pad: 12, icons: [['Insert canvas', <InsertIcon />]] },
  { name: 'SELECT', pad: 12, on: true, icons: [['Select', <SelectIcon />]] },
];

const rows: { name: string; depth: number; open?: boolean; leaf?: boolean; pics: React.ReactNode }[] = [
  { name: 'Document Settings', depth: 1, pics: <Gear /> },
  { name: 'Named Views', depth: 1, pics: <Folder /> },
  { name: 'Origin', depth: 1, pics: <><EyeOff /><Folder /></> },
  { name: 'Bodies', depth: 1, pics: <><Eye /><Folder /></> },
  { name: 'Canvases', depth: 1, pics: <><EyeOff /><Folder /></> },
  { name: 'Sketches', depth: 1, open: true, pics: <><Eye /><Folder /></> },
  { name: 'Sketch1', depth: 2, leaf: true, pics: <><EyeOff /><SmallSketch /></> },
];

const playback: [string, string][] = [
  ['Go to start', 'M0 1h2v13H0zM13 1V14L2 7.500z'],
  ['Step back', 'M0 7.500L9 1V14zM10 4h2v7h-2z'],
  ['Play', 'M1 0V15L13 7.500z'],
  ['Step forward', 'M1 4h2v7H1zM4 1V14L13 7.500z'],
  ['Go to end', 'M1 1V14L11 7.500zM11 1h2v13h-2z'],
];

const lens = (x: number, y: number, r: number) => (
  <>
    <path d={`M${x + r - 1} ${y + r - 1}L${x + r + 2.5} ${y + r + 2.5}`} stroke="#444" strokeWidth="2.400" />
    <circle cx={x} cy={y} r={r} fill="#dbe6ea" stroke="#555" strokeWidth="1.200" />
  </>
);

const TopTabs = () => (
  <TabBar>
    <QuickAccess>
      <QuickItem aria-label="Data panel">
        <Pic w={14} h={14}><path d="M0 0h4v4H0zM5 0h4v4H5zM10 0h4v4h-4zM0 5h4v4H0zM5 5h4v4H5zM10 5h4v4h-4zM0 10h4v4H0zM5 10h4v4H5zM10 10h4v4h-4z" fill="#666" /></Pic>
      </QuickItem>
      <QuickItem aria-label="File">
        <Pic w={14} h={16}><path d="M0 0H8V5H13V16H0zM9 0L13 4H9z" fill="#666" /></Pic><Caret $soft />
      </QuickItem>
      <QuickItem aria-label="Save">
        <Pic w={14} h={14}>
          <path d="M0 0H14V14H2L0 12z" fill="#666" />
          <path d="M3.500 0V5.500H10.500V0M4 14V9.500H10V14M8 11v3" stroke="#cbcbcb" />
        </Pic>
      </QuickItem>
      <QuickItem aria-label="Undo">
        <Pic w={14} h={14}><path d="M5.500 2L1 6L5.500 10M1 6H7C10 6 12.500 8 12.500 13" stroke="#666" strokeWidth="2" /></Pic><Caret $soft />
      </QuickItem>
      <QuickItem $faded aria-label="Redo">
        <Pic w={14} h={14}><path d="M8.500 2L13 6L8.500 10M13 6H7C4 6 1.500 8 1.500 13" stroke="#999" strokeWidth="2" /></Pic><Caret $soft />
      </QuickItem>
    </QuickAccess>
    <DocTab>
      <DocTitle>
        <Pic w={16} h={16}>
          <path d="M0 2L8 0L16 2L8 5z" fill="#555" /><path d="M0 2L8 5V16L0 12z" fill="#aaa" /><path d="M16 2L8 5V16L16 12z" fill="#6c6c6c" />
        </Pic>
        Untitled*
      </DocTitle>
      <button aria-label="Close tab"><Pic w={9} h={9}><path d="M.5 .5L8.500 8.500M8.500 .5L.5 8.500" stroke="#777" strokeWidth="1.500" /></Pic></button>
    </DocTab>
    <NewTab aria-label="New tab"><Pic w={14} h={14}><path d="M7 1V13M1 7H13" stroke="#777" strokeWidth="2.400" /></Pic></NewTab>
    <AccountTools>
      <button aria-label="Comments">
        <Pic w={16} h={16}><path d="M0 0H16V11H14V15L10 11H0z" fill="#5f5f5f" /><path d="M3 3.500H13M3 5.500H13M3 7.500H10" stroke="#cbcbcb" /></Pic>
      </button>
      <button aria-label="Extensions">
        <Pic w={16} h={16}><circle cx="8" cy="8" r="8" fill="#5f5f5f" /><path d="M4.500 12L8.500 7.500" stroke="#ddd" strokeWidth="2.600" strokeLinecap="round" /><path d="M10.500 3.500A3 3 0 1 0 12.600 7" stroke="#ddd" strokeWidth="2" /></Pic>
      </button>
      <button aria-label="Job status">
        <Pic w={16} h={16}><circle cx="8" cy="8" r="7.300" stroke="#5f5f5f" strokeWidth="1.200" /><circle cx="8" cy="8" r="5.500" fill="#5f5f5f" /><path d="M7.500 4.500V8.500H11" stroke="#ddd" strokeWidth="1.300" /></Pic>
      </button>
      <UserName>pieter de vries 2005</UserName>
      <button aria-label="Help">
        <Pic w={16} h={16}><circle cx="8" cy="8" r="8" fill="#5f5f5f" /><path d="M5.300 6.500C5.300 2.500 11 3 10.700 6.300C10.500 8 8 8 8 10" stroke="#ddd" strokeWidth="1.800" /><path d="M7 11.500h2v2H7z" fill="#ddd" /></Pic>
      </button>
    </AccountTools>
  </TabBar>
);

const Navigation = () => (
  <NavBar>
    <NavButton $menu aria-label="Orbit">
      <Pic w={17} h={16}>
        <path d="M4.500 4C-.5 6 0 9 3.500 11M2 8.500L3.800 11.200L.8 12" stroke="#444" />
        <path d="M5 4.500C5.300 2 6.500 .6 8 .6C9.500 .6 10.500 2 11 4.500M5 11.500C5.500 14 6.500 15.400 8 15.400C9.500 15.400 10.500 14 11 12" stroke="#444" strokeWidth="1.200" />
        <path d="M10 4.500C17.500 5.500 18 9.500 10.500 11.500" stroke="#444" />
        <path d="M11.500 2V6M9.500 4H13.500M15 6V9" stroke="#444" />
        <path d="M7.500 5.500V10.500M5 8H10" stroke="#1b8fe0" strokeWidth="1.500" />
      </Pic>
      <Caret />
    </NavButton>
    <NavButton aria-label="Look at">
      <Pic w={16} h={16}><path d="M.5 5.500H15.500V15.500H.5zM1 4L8 .5L7 3H13.500" stroke="#444" fill="#fff" /><path d="M3.500 8.500h9v4h-9z" fill="#aaa" stroke="#444" /></Pic>
    </NavButton>
    <NavButton aria-label="Pan">
      <Pic w={16} h={16}><path d="M5 15L1 9C1 7.500 3 7.500 4.500 9.500L2.500 4C3 2.500 4 3 4.500 4L6 7L5.500 1.500C6.500 .3 7.500 1 7.700 2L8.500 7L9.500 1.500C10.500 .5 11.500 1 11.300 2.500L11 7.500L13 3.500C14.500 3 15 4 14.500 5.500C13.500 9 14 11 12 15z" fill="#fff" stroke="#444" /></Pic>
    </NavButton>
    <NavButton aria-label="Zoom">
      <Pic w={16} h={16}>{lens(5.5, 7, 4.5)}<path d="M11 3.500H16M13.500 1V6M11 7.500H16" stroke="#444" /></Pic>
    </NavButton>
    <NavButton $menu aria-label="Zoom window">
      <Pic w={16} h={16}><path d="M.5 .5H15.500V15.500H.5z" stroke="#555" strokeDasharray="2 2" />{lens(7, 7, 6)}</Pic>
      <Caret />
    </NavButton>
    <NavDisplay>
      <TightButton aria-label="Display settings">
        <Pic w={16} h={16}><path d="M.5 .5h15v11H.5z" fill="#fff" stroke="#444" /><path d="M2.500 2.500h11v7h-11z" fill="#9db5dd" stroke="#3b5a94" /><path d="M5 14.500H11M8 12V14" stroke="#444" strokeWidth="2" /></Pic>
        <Caret />
      </TightButton>
      <TightButton aria-label="Grid and snaps">
        <Pic w={16} h={16}><path d="M.5 .5h15v15H.5zM3.500 0V16M6.500 0V16M9.500 0V16M12.500 0V16M0 3.500H16M0 6.500H16M0 9.500H16M0 12.500H16" fill="#f4f4f8" stroke="#777" /></Pic>
        <Caret />
      </TightButton>
      <TightButton aria-label="Viewports">
        <Pic w={16} h={16}><path d="M.5 1.500h7v6h-7zM8.500 1.500h7v6h-7zM.5 8.500h7v6h-7zM8.500 8.500h7v6h-7z" fill="#c2d2ec" stroke="#3c4f78" /><path d="M3 4h2v1H3zM11 4h2v1h-2zM3 11h2v1H3zM11 11h2v1h-2z" stroke="#8fa6cf" /></Pic>
        <Caret />
      </TightButton>
    </NavDisplay>
  </NavBar>
);

const WindowsTaskbar = () => (
  <Taskbar>
    <TaskButton aria-label="Start">
      <Pic w={16} h={16}><path d="M0 2.300L7 1.300V7.500H0zM8 1.200L16 0V7.500H8zM0 8.500H7V14.700L0 13.700zM8 8.500H16V16L8 14.800z" fill="#000" /></Pic>
    </TaskButton>
    <SearchBox>
      <Pic w={17} h={17}><circle cx="10.500" cy="6" r="5" stroke="#111" strokeWidth="1.300" /><path d="M6.500 9.500L.5 15.500" stroke="#111" strokeWidth="1.300" /></Pic>
      <SearchInput type="text" placeholder="Typ hier om te zoeken" aria-label="Typ hier om te zoeken" />
    </SearchBox>
    <TaskApps>
      <TaskViewSlot>
        <TaskButton aria-label="Task view">
          <Pic w={17} h={16}><path d="M.5 1V3.500H11.500V1M.5 15V12.500H11.500V15M1.500 5.500h9v5h-9zM15 0V3M15 8V16" stroke="#111" strokeWidth="1.200" /><path d="M13.500 4h3v3h-3z" fill="#111" /></Pic>
        </TaskButton>
      </TaskViewSlot>
      <TaskButton $running aria-label="Edge">
        <Pic w={20} h={22}><path d="M0 9.500C1 3 5 0 10.500 0C16.500 0 20 4.500 20 10V12.500H6.500C6.500 19 14 19 18.300 16V20.300C11 24.500 2.500 21.500 2.500 13C2.500 9.500 4.500 6.800 7.500 5.500C4 5.500 1.500 7.500 0 9.500zM6.800 8.800H13.800C13.800 4.500 7.500 4 6.800 8.800z" fill="#0078d7" fillRule="evenodd" /></Pic>
      </TaskButton>
      <TaskButton $running aria-label="Explorer">
        <Pic w={22} h={20}><path d="M0 1H8L10 3H21V7H0z" fill="#e3a21a" /><path d="M0 4L9 4L11 3H22V18H0z" fill="#ffd667" /><path d="M4 11H18V19H14V15H8V19H4z" fill="#4a9cdb" /></Pic>
      </TaskButton>
      <TaskButton aria-label="Mail">
        <Pic w={24} h={20}><path d="M0 7L12 0L24 7V19H0z" fill="#3d4244" /><path d="M2 7H23L14 11.500L18 15z" fill="#d8e5ea" /></Pic>
      </TaskButton>
      <TaskButton $running aria-label="Slicer">
        <Pic w={20} h={24}>
          <rect x="0" y="5" width="4" height="14" rx="2" fill="#d0187a" /><rect x="16" y="5" width="4" height="14" rx="2" fill="#1769c4" />
          <rect x="3" y="3" width="4" height="18" rx="2" fill="#6d1f6c" /><rect x="13" y="3" width="4" height="18" rx="2" fill="#153a7d" />
          <rect x="6" y="0" width="8" height="24" rx="3" fill="#3f9b38" /><path d="M9 2V22" stroke="#6cc152" strokeWidth="3" />
        </Pic>
      </TaskButton>
      <TaskButton aria-label="Store">
        <Pic w={23} h={23}><path d="M7.500 6V4C7.500 0 15.500 0 15.500 4V6M10 6V3.500C11 .5 17.500 1 17.500 5" stroke="#000" strokeWidth="1.200" /><path d="M0 6H23V23H0z" fill="#000" /><path d="M6 9h5v5H6z" fill="#f25022" /><path d="M12 9h5v5h-5z" fill="#7fba00" /><path d="M6 15h5v5H6z" fill="#00a4ef" /><path d="M12 15h5v5h-5z" fill="#ffb900" /></Pic>
      </TaskButton>
      <TaskButton $running $active aria-label="Fusion 360"><FusionLogo size={23} /></TaskButton>
    </TaskApps>
    <Tray>
      <button aria-label="Hidden icons"><Pic w={15} h={8}><path d="M1 7L6.500 1.500L12 7" stroke="#111" strokeWidth="1.300" /></Pic></button>
      <button aria-label="Safely remove"><Pic w={18} h={18}><path d="M5.500 6V1.500H11.500V6M3.500 6H13.500V10M3.500 6V16.500H9M10 14L12.500 16.500L16.500 12" stroke="#fff" strokeWidth="1.200" /></Pic></button>
      <button aria-label="Battery"><Pic w={20} h={14}><path d="M2 1V4M5 1V4M0 4H7V6C7 8 0 8 0 6zM3.500 7V11H15.500V4H8" stroke="#111" strokeWidth="1.200" /><path d="M6 6h8v4H6zM16 6h1v3h-1z" fill="#111" /></Pic></button>
      <button aria-label="Network"><Pic w={18} h={14}><path d="M3 13C3 6 8 1 15 1M6.500 13C6.500 8 10 4.500 15 4.500M10 13C10 10 12 8 15 8" stroke="#111" /><circle cx="13.500" cy="11.500" r="1.800" fill="#111" /></Pic></button>
      <button aria-label="Volume"><Pic w={17} h={14}><path d="M.5 4.500H3L6.500 1V13L3 9.500H.5zM9 5C10 6.500 10 8 9 9.500M11 3C13 5.500 13 9 11 11.500" stroke="#111" /><path d="M13.500 1C16.500 4.500 16.500 10 13.500 13" stroke="#8b979c" /></Pic></button>
      <button aria-label="Keyboard"><Pic w={23} h={13}><path d="M.5 .5h22v12H.5z" stroke="#111" strokeWidth="1.200" /><path d="M3 3.500H20M3 6.500H20" stroke="#111" strokeDasharray="1 1" /><path d="M5 9.500H18" stroke="#111" /></Pic></button>
      <Lang>ENG</Lang>
      <Clock>14:58<br />18-1-2020</Clock>
      <Notice aria-label="17 notifications">
        <svg width="28" height="26" viewBox="0 0 28 26" aria-hidden="true">
          <path d="M0 1H16V13H8L4 17V13H0z" fill="#111" /><path d="M3 4.500H13M3 7.500H13" stroke="#d2dfe8" />
          <circle cx="16" cy="16" r="8.500" fill="#ccd3d6" stroke="#777" />
          <text x="16" y="20" fontSize="11" textAnchor="middle" fontFamily="Open Sans, sans-serif" fill="#000">17</text>
        </svg>
      </Notice>
      <PeekEdge />
    </Tray>
  </Taskbar>
);

export default function App() {
  return (
    <Page>
      <Global />
      <Desktop>
        <BehindLeft />
        <AppWindow>
          <TitleBar>
            <FusionLogo size={16} />
            <TitleText>Autodesk Fusion 360 (Education License)</TitleText>
            <CaptionButton aria-label="Minimize"><Pic w={11} h={11}><path d="M0 5.500H10" stroke="#fff" /></Pic></CaptionButton>
            <CaptionButton aria-label="Maximize"><Pic w={11} h={11}><path d="M.5 .5h9v9h-9z" stroke="#fff" /></Pic></CaptionButton>
            <CaptionButton aria-label="Close"><Pic w={11} h={11}><path d="M.5 .5L10 10M10 .5L.5 10" stroke="#fff" /></Pic></CaptionButton>
          </TitleBar>
          <TopTabs />
          <Ribbon>
            <Workspace>DESIGN <Caret /></Workspace>
            <RibbonBody>
              <RibbonTabs>
                <RibbonTab $active>SOLID</RibbonTab>
                <RibbonTab>SURFACE</RibbonTab>
                <RibbonTab>SHEET METAL</RibbonTab>
                <RibbonTab>TOOLS</RibbonTab>
              </RibbonTabs>
              <Groups>
                {groups.map(g => (
                  <Group key={g.name} $pad={g.pad} $last={g.on}>
                    <Icons>
                      {g.icons.map(([name, icon]) => (
                        <ToolButton key={name} $on={g.on} aria-label={name}>{icon}</ToolButton>
                      ))}
                    </Icons>
                    <GroupLabel>{g.name} <Caret /></GroupLabel>
                  </Group>
                ))}
              </Groups>
            </RibbonBody>
          </Ribbon>
          <Canvas>
            <Model />
            <TopRow>
              <Side>
                <PanelBar>
                  <Pic w={11} h={7}><path d="M5 0V7L0 3.500zM10.500 0V7L5.500 3.500z" fill="#333" /></Pic>
                  <PanelTitle>BROWSER</PanelTitle>
                  <button aria-label="Collapse all"><RoundSign /></button>
                  <Grip />
                </PanelBar>
                <Tree>
                  <Row $depth={0}>
                    <Toggle aria-label="Collapse"><Opened /></Toggle>
                    <RootChip>
                      <Eye />
                      <RootName><CubeIcon />(Unsaved)</RootName>
                      <RootRadio type="radio" name="active" defaultChecked aria-label="Activate component" />
                    </RootChip>
                  </Row>
                  {rows.map(r => (
                    <Row key={r.name} $depth={r.depth}>
                      {r.leaf ? <Toggle as="span" /> : <Toggle aria-label="Toggle">{r.open ? <Opened /> : <Closed />}</Toggle>}
                      <Chip>{r.pics}<Label>{r.name}</Label></Chip>
                    </Row>
                  ))}
                </Tree>
              </Side>
              <CubeBox><ViewCube /></CubeBox>
            </TopRow>
            <BottomRow>
              <PanelBar $closed>
                <Spacer />
                <PanelTitle>COMMENTS</PanelTitle>
                <button aria-label="Open comments"><RoundSign plus /></button>
                <Grip />
              </PanelBar>
              <Navigation />
            </BottomRow>
          </Canvas>
          <Timeline>
            <Playback>
              {playback.map(([name, d]) => (
                <button key={name} aria-label={name}><Pic w={14} h={15}><path d={d} fill="#4a4a4a" /></Pic></button>
              ))}
            </Playback>
            <Features>
              <FeatureButton aria-label="Canvas"><SmallPicture /><Pic w={24} h={11}><path d="M8 4V9M7 9.500H24" stroke="#c8c8c8" strokeWidth="2" /></Pic></FeatureButton>
              <FeatureButton aria-label="Sketch"><SmallSketch /><Pic w={24} h={9}><path d="M8 2V7M0 7.500H24" stroke="#c8c8c8" strokeWidth="2" /></Pic></FeatureButton>
              <FeatureButton aria-label="Extrude 1"><SmallExtrude /><Pic w={24} h={9}><path d="M8 2V7M0 7.500H24" stroke="#c8c8c8" strokeWidth="2" /></Pic></FeatureButton>
              <FeatureButton aria-label="Extrude 2"><SmallExtrude /><Pic w={24} h={9}><path d="M8 2V7M0 7.500H9" stroke="#c8c8c8" strokeWidth="2" /></Pic></FeatureButton>
              <Marker><Pic w={12} h={32}><path d="M0 0H12V5L7 9V32H5V9L0 5z" fill="#666" /></Pic></Marker>
            </Features>
            <SettingsButton aria-label="Timeline settings"><Gear /></SettingsButton>
          </Timeline>
        </AppWindow>
        <BehindRight>
          <BehindBlock $h={32} $from="#a2a2a2" $to="#bcbcbc" />
          <BehindBlock $h={40} $from="#cfcfcf" $to="#f0f0f0" />
          <BehindBlock $h={196} $from="#bdbdbd" $to="#dadada" />
          <BehindBlock $h={300} $from="#6e6e6e" $to="#848484" />
        </BehindRight>
      </Desktop>
      <WindowsTaskbar />
    </Page>
  );
}
